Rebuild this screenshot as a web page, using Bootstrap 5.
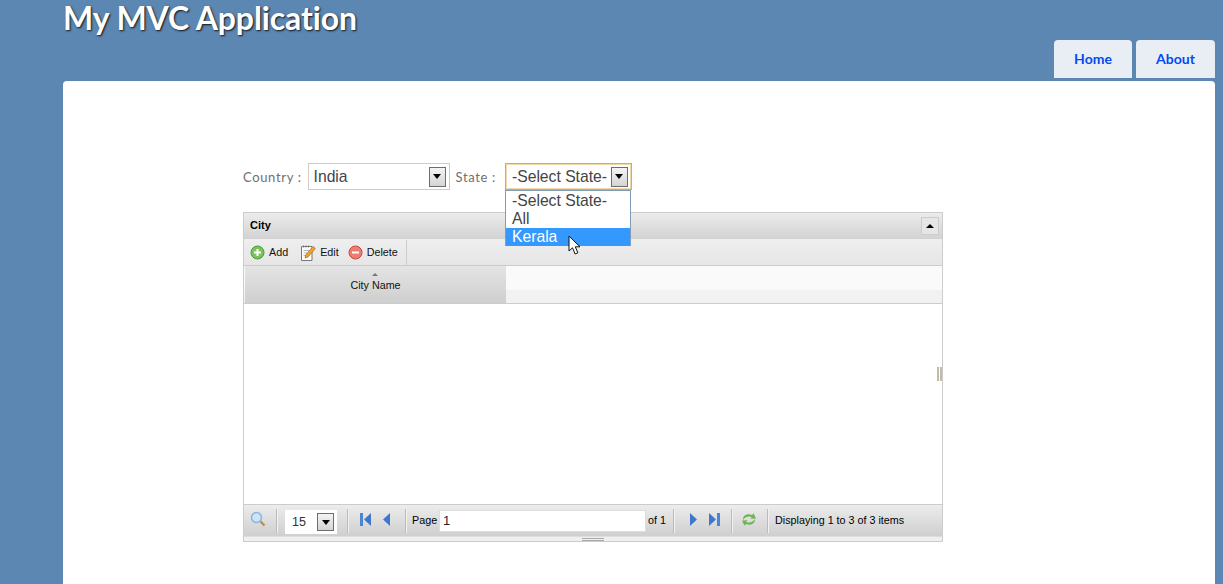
<!DOCTYPE html>
<html lang="en">
<head>
  <meta charset="UTF-8" />
  <title>My MVC Application</title>
  <link href="https://cdn.jsdelivr.net/npm/bootstrap@5.3.0/dist/css/bootstrap.min.css" rel="stylesheet">
  <style>
    html, body { height: 100%; overflow: hidden; }
    body { background: #5c87b2; font-family: "Liberation Sans", Arial, sans-serif; color: #000; }
    .app-page { margin: 0 8px 0 63px; height: 100%; }
    .app-header { height: 81px; }
    .app-title { font-family: Lato, "Noto Sans", sans-serif; font-weight: 700; font-size: 32px; line-height: 36px; letter-spacing: -.1px; margin: 0; color: #fff; text-shadow: 1px 1px 2px #111; }
    .app-menu { height: 78px; gap: 4px; }
    .app-menu a { display: block; height: 38px; line-height: 38px; text-align: center; background: #e8eef4; color: #034af3; font-family: Lato, "Noto Sans", sans-serif; font-weight: 700; font-size: 14px; border-radius: 4px 4px 0 0; text-decoration: none; }
    .tab-home { width: 78px; }
    .tab-about { width: 79px; }
    .app-main { background: #fff; border-radius: 4px 4px 0 0; height: 503px; padding: 82px 0 0 180px; }
    .filter-row { height: 27px; position: relative; }
    .filter-label { font-family: Lato, "Noto Sans", sans-serif; font-size: 13px; color: #6f6f6f; letter-spacing: .65px; white-space: nowrap; padding-top: 2px; }
    .combo { height: 27px; border: 1px solid #ccc; background: #fff; font-size: 15.7px; color: #444; padding: 0 3px 0 5px; }
    .combo-country { width: 142px; margin: 0 6px 0 6px; }
    .combo-state { width: 127px; margin-left: 9px; border: 1px solid #e5a93f; box-shadow: inset 0 0 0 1px #f3d9a8; padding-left: 6px; }
    .combo-arrow { width: 17px; height: 20px; border: 1px solid #6d6d6d; background: linear-gradient(#f4f4f4, #d4d4d4); flex: none; }
    .combo-arrow::after { content: ""; border: 4px solid transparent; border-top: 5px solid #000; border-bottom: 0; }
    .state-list { position: absolute; left: 262px; top: 27px; width: 126px; height: 56px; border: 1px solid #7f9db9; background: #fff; font-size: 15.7px; line-height: 18px; color: #444; z-index: 5; padding-top: 1px; }
    .state-list div { padding-left: 6px; height: 18px; }
    .state-list .picked { background: #3399ff; color: #fff; }
    .mouse-arrow { position: absolute; left: 325px; top: 72px; z-index: 6; }
    .city-grid { width: 700px; height: 330px; margin-top: 22px; border: 1px solid #ccc; font-size: 10.75px; line-height: 13px; }
    .grid-title { height: 27px; background: linear-gradient(#ececec, #d2d2d2); border-bottom: 1px solid #eee; padding: 0 3px 0 6px; font-weight: 700; font-size: 11px; }
    .grid-title-text { margin-bottom: 2px; }
    .grid-toggle { width: 18px; height: 18px; border: 1px solid #ccc; background: #e6e6e6; }
    .grid-toggle::after { content: ""; border: 4px solid transparent; border-bottom: 4px solid #000; border-top: 0; }
    .grid-tools { height: 26px; background: linear-gradient(#eeeeee, #e6e6e6); border-bottom: 1px solid #ccc; }
    .tool-group { height: 25px; padding-left: 6px; border-right: 1px solid #ccc; width: 163px; flex: none; }
    .tool-item { margin-right: 9px; gap: 4px; color: #111; }
    .tool-add { margin-right: 13px; }
    .grid-head { height: 38px; border-bottom: 1px solid #ccc; background: linear-gradient(#fafafa 0 24px, #f2f2f2 24px); padding-left: 1px; }
    .head-cell { width: 261px; background: linear-gradient(#e4e4e4, #cfcfcf); position: relative; padding-top: 13px; text-align: center; color: #111; }
    .head-cell::before { content: ""; position: absolute; left: 127px; top: 7px; border: 3px solid transparent; border-bottom: 3px solid #777; border-top: 0; }
    .grid-body { height: 200px; background: #fff; position: relative; }
    .col-grip { position: absolute; left: 693px; top: 63px; width: 5px; height: 14px; border-left: 2px solid #c0bca8; border-right: 2px solid #c0bca8; }
    .grid-pager { height: 32px; border-top: 1px solid #ccc; background: linear-gradient(#ececec, #cfcfcf); padding-left: 6px; }
    .pager-sep { width: 2px; height: 24px; background: #f2f2f2; border-left: 1px solid #bbb; flex: none; }
    .pager-icon { margin-bottom: 3px; }
    .page-size { width: 52px; height: 24px; margin-top: 3px; background: #fff; font-size: 12.5px; color: #333; padding: 0 3px 0 7px; flex: none; }
    .page-size .combo-arrow { height: 18px; }
    .page-input { width: 207px; height: 22px; margin-top: 1px; background: #fff; border: 1px solid #ddd; font-size: 13px; color: #223; padding-left: 3px; line-height: 20px; flex: none; }
    .grid-resize { height: 5px; background: #efefef; border-top: 1px solid #ddd; position: relative; }
    .grid-resize::after { content: ""; position: absolute; left: 338px; top: 1px; width: 22px; height: 3px; border-top: 1px solid #aaa; border-bottom: 1px solid #aaa; }
    svg { display: block; flex: none; }
  </style>
</head>
<body>
  <div class="app-page">
    <div class="app-header d-flex justify-content-between">
      <h1 class="app-title">My MVC Application</h1>
      <div class="app-menu d-flex align-items-end">
        <a href="#" class="tab-home">Home</a>
        <a href="#" class="tab-about">About</a>
      </div>
    </div>
    <div class="app-main">
      <div class="filter-row d-flex align-items-center">
        <span class="filter-label">Country :</span>
        <div class="combo combo-country d-flex align-items-center justify-content-between"><span>India</span><span class="combo-arrow d-flex align-items-center justify-content-center"></span></div>
        <span class="filter-label">State :</span>
        <div class="combo combo-state d-flex align-items-center justify-content-between"><span>-Select State-</span><span class="combo-arrow d-flex align-items-center justify-content-center"></span></div>
        <div class="state-list">
          <div>-Select State-</div>
          <div>All</div>
          <div class="picked">Kerala</div>
        </div>
        <svg class="mouse-arrow" width="15" height="21" viewBox="0 0 15 21"><path d="M1 1v15l3.500-3.200 2.600 6.200 2.800-1.200-2.600-6H12z" fill="#fff" stroke="#111"/></svg>
      </div>

      <div class="city-grid">
        <div class="grid-title d-flex align-items-center justify-content-between">
          <span class="grid-title-text">City</span>
          <span class="grid-toggle d-flex align-items-center justify-content-center"></span>
        </div>
        <div class="grid-tools d-flex">
          <div class="tool-group d-flex align-items-center">
            <span class="tool-item tool-add d-flex align-items-center">
              <svg width="15" height="15" viewBox="0 0 15 15"><circle cx="7.500" cy="7.500" r="6.500" fill="#7cc35f" stroke="#4f9a3c"/><path d="M7.500 4v7M4 7.500h7" stroke="#fff" stroke-width="2"/></svg>Add</span>
            <span class="tool-item d-flex align-items-center">
              <svg width="15" height="16" viewBox="0 0 15 16"><path d="M.5 1.500h10.500v14H.5z" fill="#fdfdfd" stroke="#777"/><path d="M2.500.5v2M5 .5v2M7.500.5v2" stroke="#777"/><path d="M2.500 5.500h6M2.500 8h4M2.500 10.500h2" stroke="#bbb"/><path d="M4 13l.7-3 7.300-8.500 2.300 2-7.300 8.500z" fill="#f2a42c" stroke="#a8641a" stroke-width=".7"/></svg>Edit</span>
            <span class="tool-item d-flex align-items-center">
              <svg width="15" height="15" viewBox="0 0 15 15"><circle cx="7.500" cy="7.500" r="6.500" fill="#ef7c70" stroke="#c9493e"/><path d="M4 7.500h7" stroke="#fff" stroke-width="2"/></svg>Delete</span>
          </div>
        </div>
        <div class="grid-head d-flex">
          <div class="head-cell">City Name</div>
        </div>
        <div class="grid-body"><div class="col-grip"></div></div>
        <div class="grid-pager d-flex align-items-center">
          <svg class="pager-icon" width="16" height="16" viewBox="0 0 16 16"><circle cx="6.500" cy="6.500" r="5" fill="#cfe3f7" stroke="#8db4dc" stroke-width="1.500"/><path d="M10.500 10.500l4 4" stroke="#b98a4e" stroke-width="2.200"/></svg>
          <span class="pager-sep" style="margin-left:10px"></span>
          <div class="page-size d-flex align-items-center justify-content-between" style="margin-left:7px"><span>15</span><span class="combo-arrow d-flex align-items-center justify-content-center"></span></div>
          <span class="pager-sep" style="margin-left:10px"></span>
          <svg class="pager-icon" style="margin-left:11px" width="11" height="13" viewBox="0 0 11 13"><path d="M0 0h3v13H0z" fill="#4a86d8"/><path d="M11 0v13L4 6.500z" fill="#3f77cc"/></svg>
          <svg class="pager-icon" style="margin-left:12px" width="7" height="13" viewBox="0 0 7 13"><path d="M7 0v13L0 6.500z" fill="#3f77cc"/></svg>
          <span class="pager-sep" style="margin-left:15px"></span>
          <span style="margin-left:5px">Page</span>
          <div class="page-input" style="margin-left:2px">1</div>
          <span style="margin-left:2px">of 1</span>
          <span class="pager-sep" style="margin-left:7px"></span>
          <svg class="pager-icon" style="margin-left:15px" width="7" height="13" viewBox="0 0 7 13"><path d="M0 0v13l7-6.500z" fill="#3f77cc"/></svg>
          <svg class="pager-icon" style="margin-left:12px" width="11" height="13" viewBox="0 0 11 13"><path d="M0 0v13l7-6.500z" fill="#3f77cc"/><path d="M8 0h3v13H8z" fill="#4a86d8"/></svg>
          <span class="pager-sep" style="margin-left:11px"></span>
          <svg class="pager-icon" style="margin-left:8px" width="16" height="15" viewBox="0 0 16 15"><path d="M2 8C1.500 3.500 6.500.8 11 3l1.500-1.800L15 6.500l-5.500.3 1.200-1.700C7.500 3.800 4 5 2 8z" fill="#6fb35a"/><path d="M14 7c.5 4.500-4.500 7.200-9 5l-1.500 1.800L1 8.500l5.500-.3-1.200 1.700c3.200 1.300 6.700.1 8.700-2.900z" fill="#6fb35a"/></svg>
          <span class="pager-sep" style="margin-left:10px"></span>
          <span style="margin-left:6px">Displaying 1 to 3 of 3 items</span>
        </div>
        <div class="grid-resize"></div>
      </div>
    </div>
  </div>
</body>
</html>
